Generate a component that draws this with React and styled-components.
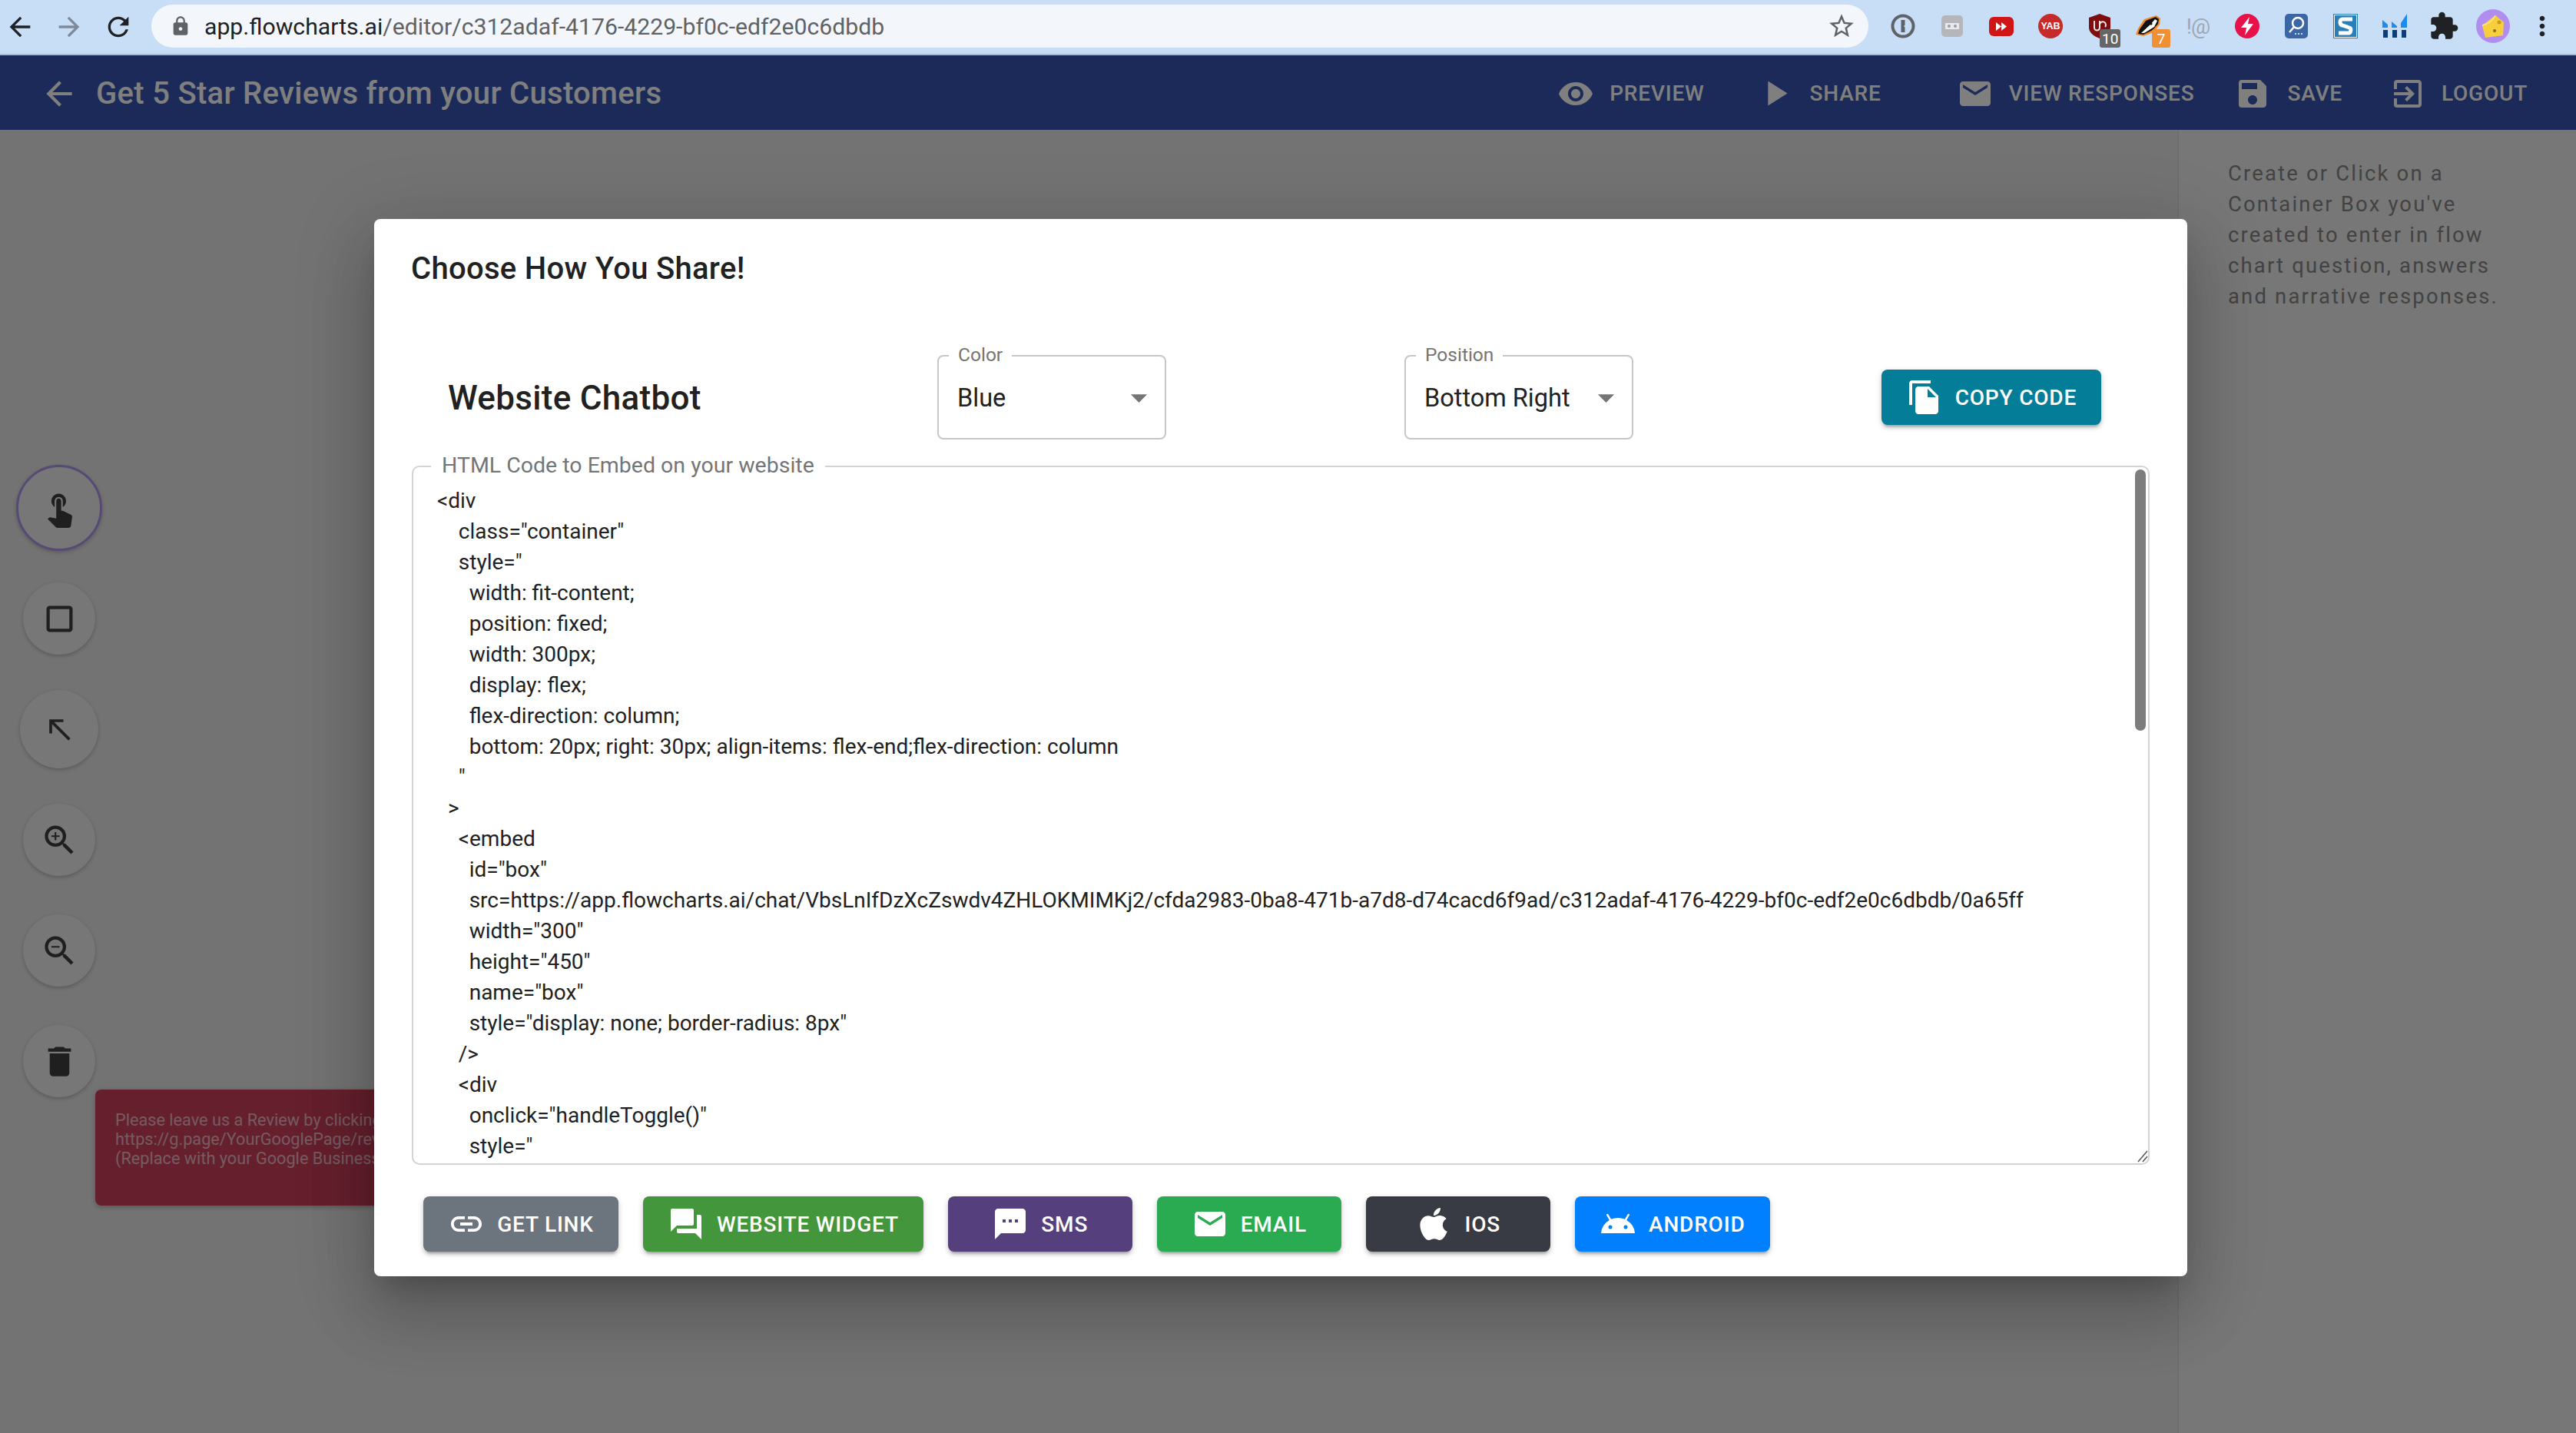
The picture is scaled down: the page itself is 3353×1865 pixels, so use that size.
import React from "react";
import styled, { createGlobalStyle } from "styled-components";
import {
  MdArrowBack, MdArrowForward, MdRefresh, MdLock, MdStarBorder, MdExtension, MdMoreVert,
  MdVisibility, MdPlayArrow, MdEmail, MdSave, MdExitToApp, MdTouchApp, MdCropSquare, MdNorthWest,
  MdZoomIn, MdZoomOut, MdDelete, MdLink, MdQuestionAnswer, MdTextsms, MdAndroid, MdFileCopy, MdArrowDropDown,
} from "react-icons/md";
import { FaApple } from "react-icons/fa";

const Global = createGlobalStyle`
  html, body { margin: 0; padding: 0; background: #e6e6e6; }
  * { box-sizing: border-box; }
  body { font-family: Roboto, "Liberation Sans", sans-serif; }
`;

const Page = styled.div`
  width: 3353px; height: 1865px; overflow: hidden; display: flex; flex-direction: column;
`;

/* browser chrome */
const BrowserBar = styled.div`
  height: 72px; flex: none; background: #c8def7; border-bottom: 2px solid #a9b9d3;
  display: flex; align-items: center; position: relative; z-index: 2;
`;
const NavIcon = styled.span`
  width: 64px; display: flex; justify-content: center; color: ${p => p.$c || "#202124"}; font-size: 40px;
`;
const NavRow = styled.div`
  display: flex; width: 197px; margin-left: -6px; flex: none;
`;
const AddressBar = styled.div`
  width: 2235px; height: 56px; background: #f3f7fc; border-radius: 28px; display: flex; align-items: center;
  padding: 0 16px 0 24px; flex: none; margin-left: 6px; margin-top: -2px;
`;
const LockIcon = styled.span`
  display: flex; color: #5f6368; font-size: 28px; margin-right: 17px;
`;
const Url = styled.div`
  font-size: 30.2px; color: #5f6368; flex: 1; white-space: nowrap;
  b { font-weight: 400; color: #1f2124; }
`;
const StarIcon = styled.span`
  display: flex; color: #5f6368; font-size: 38px;
`;
const Extensions = styled.div`
  display: flex; align-items: center; margin-left: 13px; margin-top: -2px;
`;
const Ext = styled.div`
  width: 64px; height: 56px; display: flex; align-items: center; justify-content: center; position: relative;
  flex: none; font-size: 40px; color: #202124;
`;
const ExtBadge = styled.span`
  position: absolute; left: ${p => p.$left}px; top: 32px; height: 24px; min-width: 24px; padding: 0 3px;
  background: ${p => p.$bg}; color: #fff; font-size: 19px; border-radius: 3px; display: flex; align-items: center;
  justify-content: center; line-height: 1;
`;
const YabDot = styled.span`
  width: 32px; height: 32px; border-radius: 50%; background: #c62b2b; color: #fff; font: 700 12.5px "Liberation Sans", sans-serif;
  display: flex; align-items: center; justify-content: center;
`;
const AtGlyph = styled.span`
  color: #a0a7b0; font-size: 28px; white-space: nowrap; letter-spacing: -1px;
`;

/* app */
const Frame = styled.div`
  flex: 1; position: relative; display: flex; flex-direction: column; min-height: 0;
`;
const AppBar = styled.header`
  height: 97px; flex: none; background: #3755b0; color: #fff; display: flex; align-items: center; padding: 2px 0 0 52px;
`;
const AppBack = styled.span`
  display: flex; font-size: 50px; margin-right: 23px; color: #fff;
`;
const AppTitle = styled.h1`
  margin: 0; font-size: 40px; font-weight: 500; letter-spacing: .3px; flex: 1; white-space: nowrap;
`;
const AppAction = styled.div`
  display: flex; align-items: center; font-size: 28px; font-weight: 500; letter-spacing: .8px;
  margin-right: ${p => p.$mr}px;
  svg { font-size: ${p => p.$icon || 48}px; margin-right: ${p => p.$gap || 20}px; }
`;

const Workspace = styled.div`
  flex: 1; display: flex; min-height: 0;
`;
const Canvas = styled.main`
  flex: 1; position: relative; background: #e6e6e6; padding-top: 420px;
`;
const Tools = styled.div`
  width: 154px; display: flex; flex-direction: column; align-items: center;
`;
const ToolSlot = styled.div`
  height: 144px; display: flex; align-items: center; justify-content: center;
`;
const ToolButton = styled.button`
  width: ${p => p.$size || 94}px; height: ${p => p.$size || 94}px; border-radius: 50%; background: #eeeeee; color: #3f3f3f;
  border: ${p => p.$active ? "3px solid #b094ee" : "none"}; padding: 0; display: flex; align-items: center; justify-content: center;
  font-size: ${p => p.$icon || 51}px; box-shadow: 0 2px 5px rgba(0,0,0,.22);
`;
const Note = styled.div`
  position: absolute; left: 124px; top: 1249px; width: 900px; height: 151px; background: #ca3f5b; border-radius: 8px;
  padding: 27px 26px; color: #fff; font-size: 21.7px; line-height: 25px;
  box-shadow: 0 2px 6px rgba(0,0,0,.25); white-space: nowrap;
  p { margin: 0; opacity: .62; }
`;
const SidePanel = styled.aside`
  width: 519px; flex: none; background: #eeeeee; border-left: 2px solid #dddddd; padding: 37px 0 0 64px;
  color: #868686; font-size: 27.4px; line-height: 40px; letter-spacing: 2.2px;
`;

/* dialog */
const Overlay = styled.div`
  position: absolute; inset: 0; background: rgba(0,0,0,.5); padding: 213px 0 0 487px; z-index: 1;
`;
const Dialog = styled.section`
  width: 2360px; height: 1376px; background: #fff; border-radius: 8px; display: flex; flex-direction: column;
  padding: 0 49px;
  box-shadow: 0 23px 32px -15px rgba(0,0,0,.2), 0 51px 81px 6px rgba(0,0,0,.14), 0 19px 98px 17px rgba(0,0,0,.12);
`;
const DialogTitle = styled.h2`
  margin: 42px 0 0 -1px; height: 46px; line-height: 46px; font-size: 40px; font-weight: 500; color: #212121; letter-spacing: .3px;
`;
const OptionRow = styled.div`
  display: flex; align-items: center; margin-top: 89px; height: 110px;
`;
const RowTitle = styled.h3`
  margin: 2px 0 0 47px; width: 637px; font-size: 44px; font-weight: 500; color: #212121; letter-spacing: .3px; flex: none;
`;
const SelectBox = styled.div`
  width: 298px; height: 110px; border: 2px solid #c6c6c6; border-radius: 8px; position: relative; flex: none;
  display: flex; align-items: center; padding: 1px 10px 0 24px; font-size: 32.5px; color: #212121; margin-right: ${p => p.$mr || 0}px;
  span.value { flex: 1; white-space: nowrap; }
  svg { font-size: 51px; color: #757575; flex: none; margin-right: -2px; }
`;
const FloatLabel = styled.label`
  position: absolute; left: ${p => p.$left}px; top: ${p => p.$top}px; background: #fff; padding: 0 ${p => p.$px}px;
  color: #757575; font-size: ${p => p.$fs}px; line-height: 30px; white-space: nowrap;
`;
const PrimaryButton = styled.button`
  height: 72px; border: 0; border-radius: 8px; color: #fff; background: ${p => p.$bg}; font: 500 28px Roboto, sans-serif;
  letter-spacing: .8px; text-transform: uppercase; display: flex; align-items: center; justify-content: center; padding: 0 32px;
  min-width: ${p => p.$min || 240}px; flex: none; white-space: nowrap;
  box-shadow: 0 6px 3px -4px rgba(0,0,0,.2), 0 4px 5px 0 rgba(0,0,0,.14), 0 2px 10px 0 rgba(0,0,0,.12);
  svg { font-size: 48px; margin: 0 16px 0 0; flex: none; }
`;
const CopyWrap = styled.div`
  margin-left: auto; margin-right: 63px;
`;
const CodeField = styled.div`
  height: 910px; margin-top: 34px; border: 2px solid #d3d3d3; border-radius: 10px; position: relative; display: flex;
`;
const CodeArea = styled.textarea`
  flex: 1; border: 0; outline: 0; background: transparent; border-radius: 8px; padding: 24px 0 0 31px; margin: 0;
  font: 400 28px/40px Roboto, sans-serif; color: #212121; white-space: pre-wrap; resize: none; overflow: hidden;
`;
const ScrollThumb = styled.div`
  position: absolute; right: 3px; top: 3px; width: 14px; height: 340px; border-radius: 7px; background: #7d7d7d;
`;
const ResizeGrip = styled.svg`
  position: absolute; right: 0; bottom: 1px; width: 16px; height: 16px;
`;
const ShareRow = styled.div`
  display: flex; gap: 32px; margin: 41px 0 0 15px;
`;

const code = `<div
    class="container"
    style="
      width: fit-content;
      position: fixed;
      width: 300px;
      display: flex;
      flex-direction: column;
      bottom: 20px; right: 30px; align-items: flex-end;flex-direction: column
    "
  >
    <embed
      id="box"
      src=https://app.flowcharts.ai/chat/VbsLnIfDzXcZswdv4ZHLOKMIMKj2/cfda2983-0ba8-471b-a7d8-d74cacd6f9ad/c312adaf-4176-4229-bf0c-edf2e0c6dbdb/0a65ff
      width="300"
      height="450"
      name="box"
      style="display: none; border-radius: 8px"
    />
    <div
      onclick="handleToggle()"
      style="
`;

const Svg = ({ w, h, children }) => <svg width={w} height={h} viewBox={`0 0 ${w} ${h}`}>{children}</svg>;

const App = () => (
  <Page>
    <Global />
    <BrowserBar>
      <NavRow>
        <NavIcon><MdArrowBack /></NavIcon>
        <NavIcon $c="#7e8a99"><MdArrowForward /></NavIcon>
        <NavIcon><MdRefresh /></NavIcon>
      </NavRow>
      <AddressBar>
        <LockIcon><MdLock /></LockIcon>
        <Url><b>app.flowcharts.ai</b>/editor/c312adaf-4176-4229-bf0c-edf2e0c6dbdb</Url>
        <StarIcon><MdStarBorder /></StarIcon>
      </AddressBar>
      <Extensions>
        <Ext>
          <Svg w={32} h={32}>
            <circle cx="16" cy="16" r="13.5" fill="none" stroke="#5f6368" strokeWidth="4" />
            <path d="M13.5 8h5v6.5l-1.5 1.5 1.5 1.5V24h-5z" fill="#5f6368" />
          </Svg>
        </Ext>
        <Ext>
          <Svg w={30} h={32}>
            <rect x="1" y="2" width="28" height="28" rx="5" fill="#b4b6ba" />
            <rect x="6" y="12" width="18" height="8" rx="1" fill="#e9eaec" />
            <circle cx="11" cy="16" r="2" fill="#9a9ca0" /><circle cx="19" cy="16" r="2" fill="#9a9ca0" />
          </Svg>
        </Ext>
        <Ext>
          <Svg w={32} h={28}>
            <rect x="0" y="2" width="32" height="25" rx="6" fill="#cf1515" />
            <path d="M9 9l7 5.5-7 5.5zM16 9l7 5.5-7 5.5z" fill="#fff" />
          </Svg>
        </Ext>
        <Ext><YabDot>YAB</YabDot></Ext>
        <Ext>
          <Svg w={30} h={34}>
            <path d="M15 1l14 5v13c0 7-8 12-14 14C9 31 1 26 1 19V6z" fill="#7f0d0d" />
            <path d="M8 10v9a3.5 3.5 0 0 0 7 0v-9M15 15a4 4 0 1 1 7 3" fill="none" stroke="#efe6e6" strokeWidth="2" />
          </Svg>
          <ExtBadge $left={32} $bg="#666">10</ExtBadge>
        </Ext>
        <Ext>
          <Svg w={36} h={34}>
            <path d="M28 3l5 4-1 8-8 10-13 5-10-2 3-8 8-12z" fill="#f08a24" />
            <path d="M27 5l4 3-1 6-7 8-12 6-7-1 2-6 8-11z" fill="#111" />
            <path d="M26 8l3 2-4 8-13 8-4 0 12-11z" fill="#fff" />
            <circle cx="21" cy="14" r="1.6" fill="#111" />
          </Svg>
          <ExtBadge $left={36} $bg="#ee9033">7</ExtBadge>
        </Ext>
        <Ext><AtGlyph>!@</AtGlyph></Ext>
        <Ext>
          <Svg w={32} h={32}>
            <circle cx="16" cy="16" r="16" fill="#e8114a" />
            <path d="M19 4L8 18h7l-2 10 11-15h-7z" fill="#fff" />
          </Svg>
        </Ext>
        <Ext>
          <Svg w={32} h={32}>
            <rect x="1" y="0" width="30" height="32" rx="5" fill="#3b66a6" />
            <circle cx="18" cy="12" r="7" fill="none" stroke="#fff" strokeWidth="2.5" />
            <path d="M13 17l-6 7" stroke="#fff" strokeWidth="2.5" />
            <circle cx="15" cy="26" r="1" fill="#fff" /><circle cx="19" cy="26" r="1" fill="#fff" /><circle cx="23" cy="26" r="1" fill="#fff" />
          </Svg>
        </Ext>
        <Ext>
          <Svg w={32} h={32}>
            <rect x="0" y="0" width="32" height="32" fill="#2b7fb8" />
            <rect x="1.5" y="1.5" width="29" height="29" fill="none" stroke="#fff" strokeWidth="1" />
            <path d="M25 7H12C8 7 8 14 12 15l9 3c3 1 2 7-1 7H7" fill="none" stroke="#fff" strokeWidth="5" />
          </Svg>
        </Ext>
        <Ext>
          <Svg w={32} h={32}>
            <path d="M0 8l7 6v4H0zM12 10l7 6v2h-7zM24 12l8-12v18h-8z" fill="#1a8cf0" />
            <path d="M1 21h6v10H1zM13 21h6v10h-6zM25 21h6v10h-6z" fill="#0c3f78" />
          </Svg>
        </Ext>
        <Ext><MdExtension /></Ext>
        <Ext>
          <Svg w={44} h={44}>
            <circle cx="22" cy="22" r="22" fill="#b28df0" />
            <path d="M8 21l17-13 11 9-1 17-23 3z" fill="#f7cf3c" />
            <path d="M25 8c-3 6-9 11-17 13" fill="none" stroke="#fbe88a" strokeWidth="1.5" />
            <circle cx="24" cy="28" r="2" fill="#8a6a10" /><circle cx="30" cy="17" r="2.5" fill="#c89a1a" />
          </Svg>
        </Ext>
        <Ext><MdMoreVert /></Ext>
      </Extensions>
    </BrowserBar>

    <Frame>
      <AppBar>
        <AppBack><MdArrowBack /></AppBack>
        <AppTitle>Get 5 Star Reviews from your Customers</AppTitle>
        <AppAction $mr={64}><MdVisibility />PREVIEW</AppAction>
        <AppAction $mr={98} $icon={55} $gap={18}><MdPlayArrow />SHARE</AppAction>
        <AppAction $mr={52}><MdEmail />VIEW RESPONSES</AppAction>
        <AppAction $mr={61} $gap={21}><MdSave />SAVE</AppAction>
        <AppAction $mr={63}><MdExitToApp />LOGOUT</AppAction>
      </AppBar>
      <Workspace>
        <Canvas>
          <Tools>
            <ToolSlot><ToolButton $size={112} $active><MdTouchApp /></ToolButton></ToolSlot>
            <ToolSlot><ToolButton><MdCropSquare /></ToolButton></ToolSlot>
            <ToolSlot><ToolButton $size={102} $icon={44}><MdNorthWest /></ToolButton></ToolSlot>
            <ToolSlot><ToolButton><MdZoomIn /></ToolButton></ToolSlot>
            <ToolSlot><ToolButton><MdZoomOut /></ToolButton></ToolSlot>
            <ToolSlot><ToolButton><MdDelete /></ToolButton></ToolSlot>
          </Tools>
          <Note>
            <p>Please leave us a Review by clicking here:</p>
            <p>https://g.page/YourGooglePage/review</p>
            <p>(Replace with your Google Business Link)</p>
          </Note>
        </Canvas>
        <SidePanel>
          Create or Click on a<br />Container Box you've<br />created to enter in flow<br />chart question, answers<br />and narrative responses.
        </SidePanel>
      </Workspace>

      <Overlay>
        <Dialog>
          <DialogTitle>Choose How You Share!</DialogTitle>
          <OptionRow>
            <RowTitle>Website Chatbot</RowTitle>
            <SelectBox $mr={310}>
              <FloatLabel $left={13} $top={-17} $px={12} $fs={24.5}>Color</FloatLabel>
              <span className="value">Blue</span>
              <MdArrowDropDown />
            </SelectBox>
            <SelectBox>
              <FloatLabel $left={13} $top={-17} $px={12} $fs={24.5}>Position</FloatLabel>
              <span className="value">Bottom Right</span>
              <MdArrowDropDown />
            </SelectBox>
            <CopyWrap>
              <PrimaryButton $bg="#047d98" $min={286}><MdFileCopy />Copy Code</PrimaryButton>
            </CopyWrap>
          </OptionRow>
          <CodeField>
            <FloatLabel $left={23} $top={-17} $px={14} $fs={28.5}>HTML Code to Embed on your website</FloatLabel>
            <CodeArea readOnly defaultValue={code} />
            <ScrollThumb />
            <ResizeGrip viewBox="0 0 16 16">
              <path d="M15 1L3 15M15 8l-6 7" stroke="#555" strokeWidth="1.5" fill="none" />
            </ResizeGrip>
          </CodeField>
          <ShareRow>
            <PrimaryButton $bg="#6c757d" $min={254}><MdLink />Get Link</PrimaryButton>
            <PrimaryButton $bg="#43963c" $min={364}><MdQuestionAnswer />Website Widget</PrimaryButton>
            <PrimaryButton $bg="#553f7c"><MdTextsms />SMS</PrimaryButton>
            <PrimaryButton $bg="#2aab52"><MdEmail />Email</PrimaryButton>
            <PrimaryButton $bg="#383b43"><FaApple />iOS</PrimaryButton>
            <PrimaryButton $bg="#0080ff" $min={254}><MdAndroid />Android</PrimaryButton>
          </ShareRow>
        </Dialog>
      </Overlay>
    </Frame>
  </Page>
);

export default App;
